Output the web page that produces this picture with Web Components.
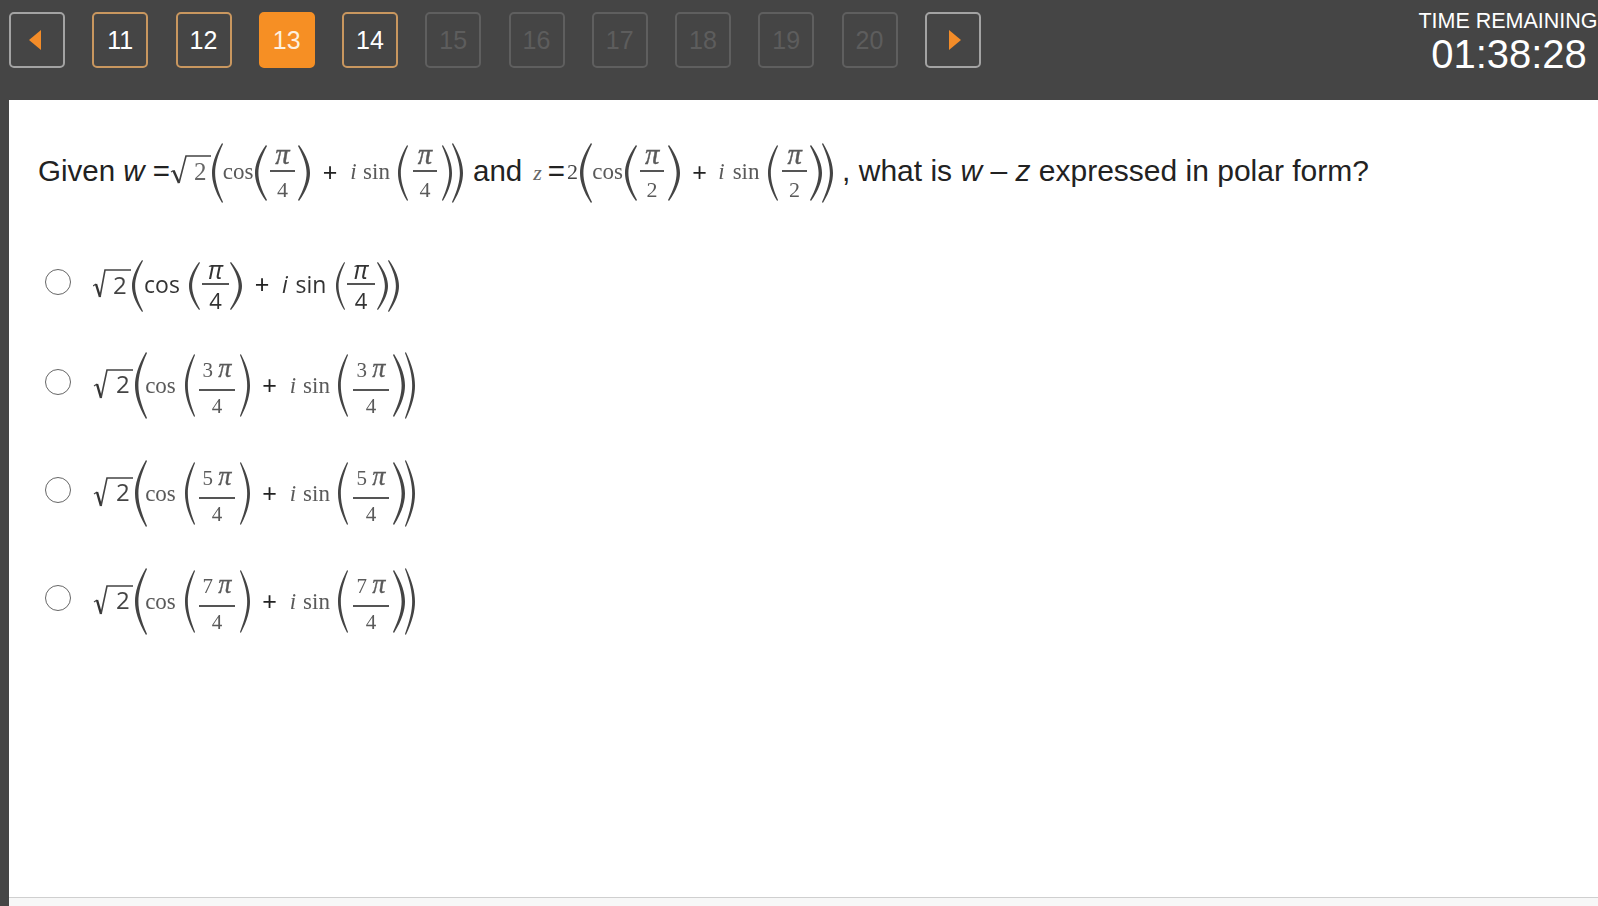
<!DOCTYPE html>
<html>
<head>
<meta charset="utf-8">
<title>Question 13</title>
<style>
html, body { margin: 0; height: 906px; overflow: hidden; background: #454545; }
</style>
</head>
<body>
<exam-page>
    <top-bar slot="bar">
        <nav-btn kind="arrow" dir="left"></nav-btn>
        <nav-btn kind="seen">11</nav-btn>
        <nav-btn kind="seen">12</nav-btn>
        <nav-btn kind="current">13</nav-btn>
        <nav-btn kind="seen">14</nav-btn>
        <nav-btn kind="off">15</nav-btn>
        <nav-btn kind="off">16</nav-btn>
        <nav-btn kind="off">17</nav-btn>
        <nav-btn kind="off">18</nav-btn>
        <nav-btn kind="off">19</nav-btn>
        <nav-btn kind="off">20</nav-btn>
        <nav-btn kind="arrow" dir="right"></nav-btn>
        <time-box slot="timer" label="TIME REMAINING" value="01:38:28"></time-box>
    </top-bar>
    <question-line>
        <q-text>Given <i>w</i> =</q-text>
        <polar-expr kind="q1" coef="root" num="π" den="4"></polar-expr>
        <q-text style="margin-left:10px">and</q-text>
        <q-text style="margin-left:11px;font:italic 22px 'Liberation Serif',serif;color:#666;padding:0">z</q-text>
        <q-text style="margin-left:6px">=</q-text>
        <polar-expr kind="q2" coef="two" num="π" den="2" style="margin-left:2px"></polar-expr>
        <q-text style="margin-left:9px;font-size:30px">, what is <i>w</i> – <i>z</i> expressed in polar form?</q-text>
    </question-line>
    <answer-option style="margin-top:57px"><polar-expr kind="sans" coef="root" num="π" den="4"></polar-expr></answer-option>
    <answer-option style="margin-top:40px"><polar-expr kind="serif" coef="root" num="3 π" den="4"></polar-expr></answer-option>
    <answer-option style="margin-top:41px"><polar-expr kind="serif" coef="root" num="5 π" den="4"></polar-expr></answer-option>
    <answer-option style="margin-top:41px"><polar-expr kind="serif" coef="root" num="7 π" den="4"></polar-expr></answer-option>
</exam-page>
<script>
class ExamPage extends HTMLElement {
    constructor() {
        super()
        this.attachShadow({mode: 'open'}).innerHTML = `
            <style>
            :host { display: flex; flex-direction: column; height: 906px; font-family: "Liberation Sans", Arial, sans-serif; }
            #panel { flex: 1; margin-left: 9px; padding: 43px 0 0 29px; background: #fff; min-height: 0; }
            #foot { height: 8px; margin-left: 9px; border-top: 1px solid #cfcfcf; background: #f7f7f7; }
            </style>
            <slot name="bar"></slot>
            <div id="panel"><slot></slot></div>
            <div id="foot"></div>
        `
    }
}
customElements.define('exam-page', ExamPage)

class TopBar extends HTMLElement {
    constructor() {
        super()
        this.attachShadow({mode: 'open'}).innerHTML = `
            <style>
            :host { display: flex; align-items: flex-start; height: 100px; background: #454545; overflow: hidden; }
            #nav { display: flex; gap: 27.25px; padding: 12px 0 0 9px; }
            #right { margin-left: auto; flex: none; }
            </style>
            <div id="nav"><slot></slot></div>
            <div id="right"><slot name="timer"></slot></div>
        `
    }
}
customElements.define('top-bar', TopBar)

class NavBtn extends HTMLElement {
    constructor() {
        super()
        this.attachShadow({mode: 'open'}).innerHTML = `
            <style>
            :host {
                display: flex; align-items: center; justify-content: center;
                box-sizing: border-box; width: 56px; height: 56px;
                border: 2px solid #5f5f5f; border-radius: 5px;
                font: 25px "Liberation Sans", Arial, sans-serif; color: #5d5d5d;
            }
            :host([kind="seen"]) { border-color: #c9975f; color: #fff; }
            :host([kind="current"]) { border-color: #f68f24; background: #f68f24; color: #fdf0df; }
            :host([kind="arrow"]) { border-color: #a3a3a3; }
            :host([dir="left"]) svg { margin-right: 4px; }
            :host([dir="right"]) svg { margin-left: 4px; }
            svg { display: block; filter: blur(.5px); }
            </style>
            <slot></slot>
        `
    }
    connectedCallback() {
        if (this.getAttribute('kind') !== 'arrow') return
        let points = this.getAttribute('dir') === 'left' ? '13,0 13,20 1,10' : '1,0 1,20 13,10'
        this.shadowRoot.innerHTML += `<svg width="14" height="20" viewBox="0 0 14 20"><polygon points="${points}" fill="#f38c28"/></svg>`
    }
}
customElements.define('nav-btn', NavBtn)

class TimeBox extends HTMLElement {
    constructor() {
        super()
        this.attachShadow({mode: 'open'}).innerHTML = `
            <style>
            :host { display: block; box-sizing: border-box; width: 180px; padding-top: 9px; color: #fff; text-align: center; font-family: "Liberation Sans", Arial, sans-serif; white-space: nowrap; }
            #label { font-size: 21.5px; line-height: 24px; }
            #value { font-size: 40px; line-height: 42px; margin-left: 2px; }
            </style>
            <div id="label"></div>
            <div id="value"></div>
        `
    }
    connectedCallback() {
        this.shadowRoot.getElementById('label').textContent = this.getAttribute('label')
        this.shadowRoot.getElementById('value').textContent = this.getAttribute('value')
    }
}
customElements.define('time-box', TimeBox)

class QuestionLine extends HTMLElement {
    constructor() {
        super()
        this.attachShadow({mode: 'open'}).innerHTML = `
            <style>
            :host { display: flex; align-items: center; height: 60px; color: #222; }
            </style>
            <slot></slot>
        `
    }
}
customElements.define('question-line', QuestionLine)

class QText extends HTMLElement {
    constructor() {
        super()
        this.attachShadow({mode: 'open'}).innerHTML = `
            <style>
            :host { display: block; flex: none; font-size: 29.5px; padding-bottom: 4px; white-space: nowrap; }
            </style>
            <slot></slot>
        `
    }
}
customElements.define('q-text', QText)

class AnswerOption extends HTMLElement {
    constructor() {
        super()
        this.attachShadow({mode: 'open'}).innerHTML = `
            <style>
            :host { display: flex; align-items: center; margin-left: 8px; }
            #radio { flex: none; box-sizing: border-box; width: 26px; height: 26px; margin: 0 22px 8px -1px; border: 1px solid #666; border-radius: 50%; background: #fff; }
            </style>
            <div id="radio"></div>
            <slot></slot>
        `
    }
}
customElements.define('answer-option', AnswerOption)

// [start, end] of every piece: root, (, cos, (, frac, ), +, i, sin, (, frac, ), )
const POLAR_GEOM = {
    q1: [[170,211],[212,223],[223,253],[255,267],[270,295],[298,310],[323,337],[350,357],[363,390],[398,408],[413,437],[442,452],[452,463]],
    q2: [[567,578],[580,592],[592,623],[625,637],[640,664],[668,680],[692,707],[718,725],[732,760],[768,778],[782,807],[810,822],[822,833]],
    sans: [[93,131],[132,143],[145,179],[189,200],[202,229],[230,242],[255,269],[283,287],[297,325],[336,345],[347,375],[377,388],[388,399]],
    serif: [[93,133],[135,147],[145,176],[185,195],[199,235],[240,250],[262,277],[291,295],[303,330],[338,348],[353,389],[393,405],[405,415]]
}
// thin tick, thick down stroke, thin up stroke and bar
const ROOT_PATH = {
    q1: ['M1 29 L3.5 27.5', 'M3.5 27.5 L9 40', 'M9 40 L16 13 L41 13'],
    sans: ['M0 26 L3 24', 'M3 24 L7 37', 'M7 37 L12 10 L38 10'],
    serif: ['M1 34 L4 32', 'M4 32 L8 46', 'M8 46 L14 18 L40 18']
}
const PAREN = 'M11 0 C3 12 0 22 0 30 C0 38 3 48 11 60 L12 59 C6 47 3.4 38 3.4 30 C3.4 22 6 13 12 1 Z'

class PolarExpr extends HTMLElement {
    connectedCallback() {
        let kind = this.getAttribute('kind')
        let geom = POLAR_GEOM[kind]
        let num = this.getAttribute('num')
        let den = this.getAttribute('den')
        let coef = this.getAttribute('coef')
        let rootWidth = geom[0][1] - geom[0][0]
        let rootPad = {q1: 24, sans: 20, serif: 23}[kind]
        let rootLines = coef === 'root' ? ROOT_PATH[kind] : []
        let root = coef === 'root'
            ? `<span class="root" style="padding-left:${rootPad}px">2<svg width="${rootWidth}" height="100%"><path d="${rootLines[0]}" fill="none" stroke="#444" stroke-width="1.2"/><path d="${rootLines[1]}" fill="none" stroke="#333" stroke-width="2.4"/><path d="${rootLines[2]}" fill="none" stroke="#444" stroke-width="1.6"/></svg></span>`
            : `<span class="root">2</span>`
        let paren = (flip, big) => `<svg class="paren ${big ? 'big' : ''} ${flip ? 'flip' : ''}" viewBox="0 0 12 60" preserveAspectRatio="none"><path d="${PAREN}" fill="#444"/></svg>`
        let frac = () => `<span class="frac"><span class="num">${num.replace('π', '<i>π</i>')}</span><span class="rule"></span><span class="den">${den}</span></span>`
        let pieces = [
            root, paren(false, true), `<span class="txt">cos</span>`, paren(false), frac(), paren(true),
            `<span class="plus">+</span>`, `<span class="txt"><i>i</i></span>`, `<span class="txt">sin</span>`,
            paren(false), frac(), paren(true), paren(true, true)
        ]
        let html = ''
        let x = geom[0][0]
        pieces.forEach((piece, n) => {
            html += `<div class="cell" style="margin-left:${geom[n][0] - x}px;width:${geom[n][1] - geom[n][0]}px">${piece}</div>`
            x = geom[n][1]
        })
        this.attachShadow({mode: 'open'}).innerHTML = `
            <style>
            :host { display: flex; align-items: center; flex: none; height: var(--h); color: var(--ink); white-space: nowrap; filter: blur(.35px); font: var(--tf); }
            :host([kind="q1"]), :host([kind="q2"]) { --h: 60px; --ink: #5a5a5a; --tf: 23px "Liberation Serif", serif; --ff: 22px "Liberation Serif", serif; --up: 0px; --den: 5px; --numup: 0px; --pi: 1.3em; --tup: 2px; --rootup: 2px; --pistroke: .4px; }
            :host([kind="sans"]) { --h: 52px; --ink: #333; --tf: 23px "Open Sans", sans-serif; --ff: 22px "Open Sans", sans-serif; --up: 4px; --den: 2px; --numup: 0px; --pi: 1.15em; --tup: 4px; --rootup: 3px; --pistroke: 0; }
            :host([kind="serif"]) { --h: 67px; --ink: #5a5a5a; --tf: 23px "Liberation Serif", serif; --ff: 21px "Liberation Serif", serif; --up: -3px; --den: 2px; --numup: 6px; --pi: 1.25em; --tup: 0px; --rootup: 4px; --pistroke: .3px; }
            .cell { display: flex; align-items: center; justify-content: center; flex: none; height: 100%; position: relative; }
            .txt { white-space: pre; padding-bottom: var(--tup); }
            .plus { font: 25px "Liberation Sans", sans-serif; color: #222; padding-bottom: var(--tup); }
            .root { position: relative; display: block; width: 100%; box-sizing: border-box; height: 100%; font: 24px/calc(var(--h) - var(--rootup)) "Open Sans", sans-serif; color: #444; }
            :host([kind="q1"]) .root, :host([kind="q2"]) .root { font: 25px/calc(var(--h) - var(--rootup)) "Liberation Serif", serif; color: #666; }
            :host([kind="q2"]) .root { font-size: 22px; color: #444; text-align: center; }
            .root svg { position: absolute; left: 0; top: 0; }
            .paren { display: block; width: 100%; height: calc(100% - 4px); }
            .paren.big { height: 100%; }
            .paren.flip { transform: scaleX(-1); }
            .frac { display: grid; grid-template-rows: 1fr 2px 1fr; width: 100%; height: 60px; margin-bottom: var(--up); font: var(--ff); text-align: center; }
            .num { align-self: end; line-height: 26px; padding-bottom: var(--numup); white-space: pre; }
            .num i { font-size: var(--pi); line-height: 0; -webkit-text-stroke: var(--pistroke) currentColor; }
            .rule { background: #555; }
            .den { align-self: start; line-height: 26px; padding-top: var(--den); }
            </style>
            ${html}
        `
    }
}
customElements.define('polar-expr', PolarExpr)
</script>
</body>
</html>
